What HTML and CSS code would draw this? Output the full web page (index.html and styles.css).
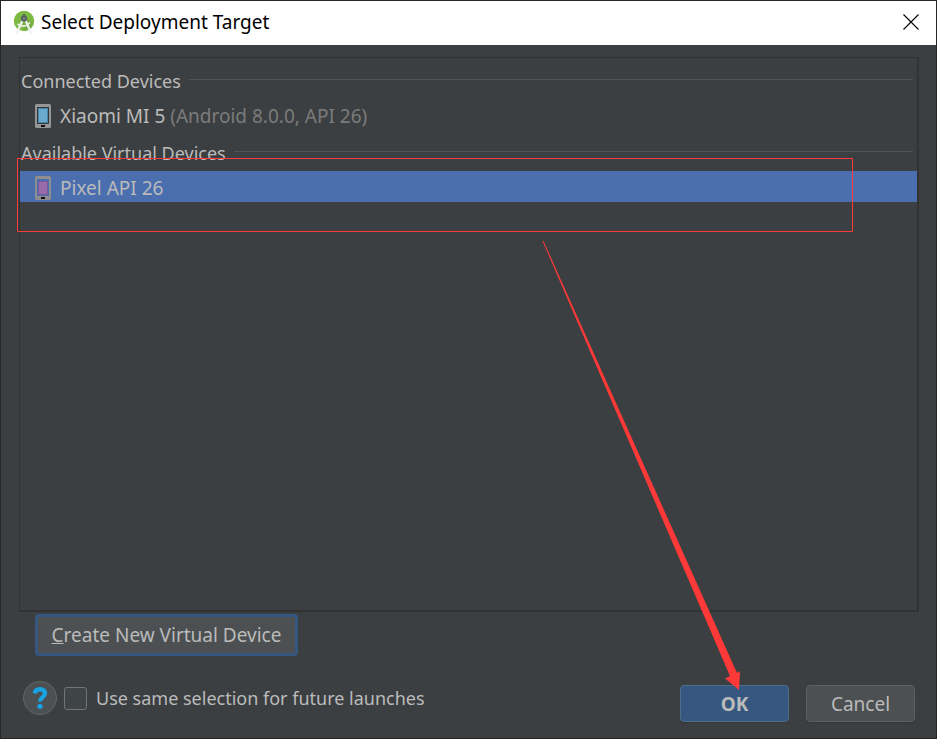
FILE: index.html
```html
<!DOCTYPE html>
<html lang="en">
<head>
<meta charset="utf-8">
<title>Select Deployment Target</title>
<link rel="stylesheet" href="styles.css">
</head>
<body>
<main class="dialog">
  <header class="titlebar">
    <svg class="app-icon" viewBox="0 0 22 24" aria-hidden="true">
      <circle cx="11" cy="11" r="10.200" fill="#7db843"/>
      <path d="M11 5l9 8a10 10 0 0 1-8 8z" fill="#6da33c" opacity=".5"/>
      <path d="M4.500 14q6.500 5 12.500-1.500" fill="none" stroke="#e8efe2" stroke-width="1.600"/>
      <path d="M9.500 10.500L4 22.500M12.500 10.500L18 22.500" stroke="#f2f2f2" stroke-width="2.200" stroke-linecap="round"/>
      <path d="M10 4h2v3h-2z" fill="#55605a"/>
      <circle cx="11" cy="8.500" r="3.200" fill="#5c6660"/>
      <circle cx="11" cy="8.500" r="1" fill="#849084"/>
    </svg>
    <h1 class="title">Select Deployment Target</h1>
    <button class="close" type="button" aria-label="Close">
      <svg viewBox="0 0 16 16" aria-hidden="true"><path d="M.5.5l15 15M15.500.5l-15 15" stroke="#000" stroke-width="1.100"/></svg>
    </button>
  </header>
  <div class="content">
    <section class="devices">
      <h2 class="group">Connected Devices</h2>
      <div class="device">
        <svg class="phone" viewBox="0 0 16 24" aria-hidden="true">
          <rect width="16" height="24" rx="1.500" fill="#969696"/>
          <rect x="2" y="3" width="12" height="17" fill="#343638"/>
          <rect x="3" y="4" width="10" height="15" fill="#4787ab"/>
          <rect x="4" y="5" width="8" height="13" fill="#6baacb"/>
          <rect x="6" y="21" width="4" height="2" fill="#111"/>
        </svg>
        <span>Xiaomi MI 5 <span class="detail">(Android 8.0.0, API 26)</span></span>
      </div>
      <h2 class="group">Available Virtual Devices</h2>
      <div class="device selected">
        <svg class="phone" viewBox="0 0 16 24" aria-hidden="true">
          <rect width="16" height="24" rx="1.500" fill="#8e8e90"/>
          <rect x="2" y="3" width="12" height="17" fill="#4b6eaf"/>
          <rect x="3" y="5" width="10" height="14" fill="#76599c"/>
          <rect x="4" y="6" width="8" height="12" fill="#9a6bab"/>
          <rect x="6" y="21" width="4" height="2" fill="#111"/>
        </svg>
        <span>Pixel API 26</span>
      </div>
    </section>
    <button class="button create" type="button"><span class="mnemonic">C</span>reate New Virtual Device</button>
    <footer class="footer">
      <button class="help" type="button" aria-label="Help">
        <svg viewBox="0 0 16 24" aria-hidden="true">
          <path d="M2.800 7.500C3.200 4.200 5 3.300 8 3.300c3.300 0 5 1.500 5 4 0 3.700-5 4-5 8.200" fill="none" stroke="#18a4e2" stroke-width="4.400"/>
          <circle cx="8" cy="20.300" r="2.600" fill="#18a4e2"/>
        </svg>
      </button>
      <input class="check" type="checkbox" id="same">
      <label class="check-label" for="same">Use same selection for future launches</label>
      <div class="actions">
        <button class="button primary" type="button">OK</button>
        <button class="button" type="button">Cancel</button>
      </div>
    </footer>
  </div>
  <svg class="markup" width="937" height="739" viewBox="0 0 937 739" aria-hidden="true">
    <rect x="17.500" y="158.500" width="835" height="73" fill="none" stroke="#fc3a3a"/>
    <path d="M542.500 241L543.500 241 737 673 740 671 739 690 725 678.500 730 676z" fill="#ff3838"/>
  </svg>
</main>
</body>
</html>
```
FILE: styles.css
```css
* {
  box-sizing: border-box;
}

body {
  margin: 0;
  background: #3c3f41;
  color: #bbbbbb;
  font: 19px/24px "Noto Sans", sans-serif;
}

button {
  font: inherit;
  color: inherit;
}

.dialog {
  position: relative;
  display: flex;
  flex-direction: column;
  min-height: 100vh;
  border: 1px solid #262626;
}

.titlebar {
  display: flex;
  align-items: center;
  height: 44px;
  padding: 0 17px 2px 12px;
  background: #fff;
  color: #000;
}

.app-icon {
  width: 22px;
  height: 24px;
}

.title {
  margin: 0 auto 0 6px;
  font-size: 19px;
  font-weight: 400;
}

.close {
  display: flex;
  padding: 0;
  border: 0;
  background: none;
}

.close svg {
  width: 16px;
  height: 16px;
}

.content {
  display: flex;
  flex: 1;
  flex-direction: column;
  padding: 12px 17px 16px 18px;
}

.devices {
  flex: 1;
  border: solid #323232;
  border-width: 1px 2px 2px 1px;
}

.group {
  display: flex;
  align-items: center;
  gap: 8px;
  height: 41px;
  margin: 0;
  padding: 4px 4px 0 1px;
  font-size: 18px;
  font-weight: 400;
}

.group::after {
  flex: 1;
  height: 1px;
  margin-bottom: 2px;
  background: #515456;
  content: "";
}

.device {
  display: flex;
  align-items: center;
  gap: 9px;
  height: 31px;
  padding: 2px 0 0 15px;
}

.selected {
  background: #4b6eaf;
}

.phone {
  width: 16px;
  height: 24px;
}

.detail {
  color: #7b7b7b;
}

.button {
  width: 109px;
  height: 37px;
  padding: 0;
  border: 1px solid #5d6061;
  border-radius: 4px;
  background: #4c5052;
  box-shadow: 0 1px 1px #353739;
}

.create {
  width: 263px;
  height: 42px;
  margin: 2px 0 0 16px;
  border: 3px solid #365880;
  box-shadow: none;
}

.mnemonic {
  text-decoration: underline;
}

.primary {
  border-color: #4c708c;
  background: #365880;
  font-weight: 700;
}

.footer {
  display: flex;
  align-items: center;
  margin-top: 18px;
  padding: 0 4px;
}

.help {
  display: flex;
  align-items: center;
  justify-content: center;
  width: 34px;
  height: 34px;
  padding: 0;
  border: 1px solid #636667;
  border-radius: 50%;
  background: #4c5052;
}

.help svg {
  width: 16px;
  height: 24px;
}

.check {
  width: 23px;
  height: 23px;
  margin: 0 9px 0 7px;
  border: 1px solid #747474;
  border-radius: 3px;
  background: #3f4447;
  appearance: none;
}

.check-label {
  font-size: 18px;
}

.actions {
  display: flex;
  gap: 17px;
  margin-left: auto;
  padding-top: 11px;
}

.markup {
  position: absolute;
  top: -1px;
  left: -1px;
  pointer-events: none;
}
```
